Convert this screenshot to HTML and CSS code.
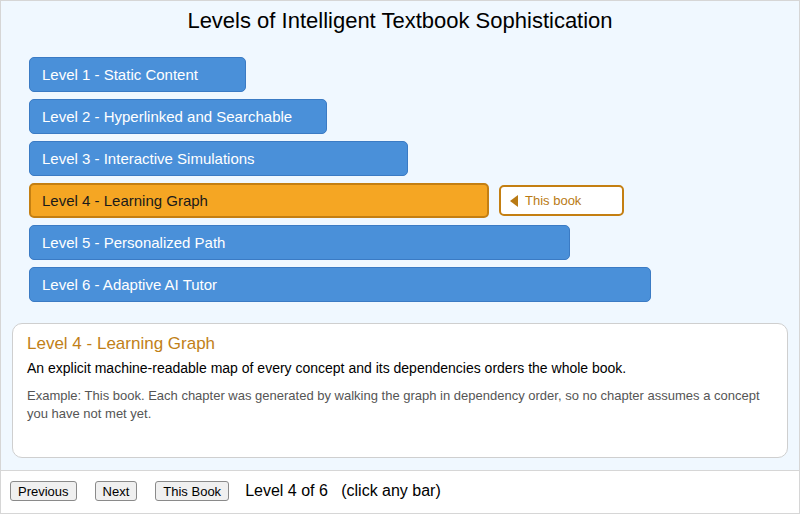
FILE: index.html
```html
<!DOCTYPE html>
<html>

<head>
    <title>Levels of Intelligent Textbook Sophistication</title>
    <link rel="stylesheet" href="styles.css">
    <script>
        // Description: data for each level, the text shown in the info box
        let levels = [
            ["Level 1 - Static Content", "Plain text and pictures, the same as a printed book.", "Example: A PDF of a printed textbook."],
            ["Level 2 - Hyperlinked and Searchable", "Pages are linked together and the whole book can be searched.", "Example: A web site with a table of contents and a search box."],
            ["Level 3 - Interactive Simulations", "Readers can change values in small programs and watch what happens.", "Example: A slider that changes the angle of a launched ball."],
            ["Level 4 - Learning Graph", "An explicit machine-readable map of every concept and its dependencies orders the whole book.", "Example: This book. Each chapter was generated by walking the graph in dependency order, so no chapter assumes a concept you have not met yet."],
            ["Level 5 - Personalized Path", "The book picks the next section based on what each reader already knows.", "Example: A quiz result that skips chapters the reader has mastered."],
            ["Level 6 - Adaptive AI Tutor", "An AI tutor talks with the reader and adapts the lesson as it goes.", "Example: A chatbot that explains a concept again in a new way."]
        ]
        let current = 3
        let thisBook = 3

        // Description: shows the level that was picked
        // Input/Parameters: index of the level, 0 to 5
        function showLevel(n) {
            current = n
            let bars = document.querySelectorAll(".bar")
            for (let i = 0; i < bars.length; i++) {
                bars[i].classList.remove("selected")
            }
            bars[n].classList.add("selected")
            infoTitle.innerHTML = levels[n][0]
            infoText.innerHTML = levels[n][1]
            infoExample.innerHTML = levels[n][2]
            levelText.innerHTML = "Level " + (n + 1) + " of 6   (click any bar)"
        }
        function previousLevel() {
            if (current > 0) {
                showLevel(current - 1)
            }
        }
        function nextLevel() {
            if (current < 5) {
                showLevel(current + 1)
            }
        }
    </script>
</head>

<body>
    <div class="app">
        <div class="canvas">
            <h1 class="title">Levels of Intelligent Textbook Sophistication</h1>

            <div class="bars">
                <div class="row">
                    <div class="bar" style="width: 217px" onclick="showLevel(0)">Level 1 - Static Content</div>
                </div>
                <div class="row">
                    <div class="bar" style="width: 298px" onclick="showLevel(1)">Level 2 - Hyperlinked and Searchable</div>
                </div>
                <div class="row">
                    <div class="bar" style="width: 379px" onclick="showLevel(2)">Level 3 - Interactive Simulations</div>
                </div>
                <div class="row">
                    <div class="bar selected" style="width: 460px" onclick="showLevel(3)">Level 4 - Learning Graph</div>
                    <div class="tag"><span class="arrow"></span>This book</div>
                </div>
                <div class="row">
                    <div class="bar" style="width: 541px" onclick="showLevel(4)">Level 5 - Personalized Path</div>
                </div>
                <div class="row">
                    <div class="bar" style="width: 622px" onclick="showLevel(5)">Level 6 - Adaptive AI Tutor</div>
                </div>
            </div>

            <div class="info">
                <div class="infoTitle" id="infoTitle">Level 4 - Learning Graph</div>
                <div class="infoText" id="infoText">An explicit machine-readable map of every concept and its dependencies orders the whole book.</div>
                <div class="infoExample" id="infoExample">Example: This book. Each chapter was generated by walking the graph in dependency order, so no chapter assumes a concept you have not met yet.</div>
            </div>
        </div>

        <div class="controls">
            <button class="btn" onclick="previousLevel()">Previous</button>
            <button class="btn" onclick="nextLevel()">Next</button>
            <button class="btn" onclick="showLevel(thisBook)">This Book</button>
            <span class="levelText" id="levelText">Level 4 of 6   (click any bar)</span>
        </div>
    </div>
</body>

</html>
```

FILE: styles.css
```css
body {
    margin: 0;
    background: #ffffff;
    font-family: 'Liberation Sans', Arial, Helvetica, sans-serif;
    color: #000000;
}

.app {
    width: 800px;
    box-sizing: border-box;
    border: 1px solid #d6d6d6;
}

.canvas {
    height: 469px;
    background: #f0f8ff;
    border-bottom: 1px solid #d6d6d6;
}

.title {
    margin: 0;
    padding-top: 7px;
    font-size: 22px;
    line-height: 26px;
    font-weight: normal;
    text-align: center;
}

/* bars */
.bars {
    display: flex;
    flex-direction: column;
    gap: 7px;
    margin: 23px 0 0 28px;
}

.row {
    display: flex;
    align-items: center;
    height: 35px;
}

.bar {
    box-sizing: border-box;
    height: 35px;
    display: flex;
    align-items: center;
    padding-left: 12px;
    background-color: #4a90d9;
    border: 1px solid #3b7bc4;
    border-radius: 5px;
    color: #ffffff;
    font-size: 15px;
    cursor: pointer;
}

.bar.selected {
    padding-left: 11px;
    background-color: #f5a623;
    border: 2px solid #c47f12;
    color: #1a1a1a;
}

.tag {
    box-sizing: border-box;
    width: 125px;
    height: 31px;
    margin-left: 10px;
    display: flex;
    align-items: center;
    padding-left: 9px;
    background: #ffffff;
    border: 2px solid #c47f12;
    border-radius: 5px;
    color: #b97a14;
    font-size: 13px;
}

.arrow {
    width: 0;
    height: 0;
    margin-right: 7px;
    border-top: 6px solid transparent;
    border-bottom: 6px solid transparent;
    border-right: 8px solid #b97a14;
}

/* info box */
.info {
    box-sizing: border-box;
    height: 135px;
    margin: 21px 11px 0 11px;
    padding: 10px 14px 0 14px;
    background: #ffffff;
    border: 1px solid #cfcfcf;
    border-radius: 10px;
}

.infoTitle {
    font-size: 17px;
    line-height: 20px;
    color: #c17f18;
}

.infoText {
    margin-top: 4px;
    font-size: 14px;
    line-height: 20px;
}

.infoExample {
    margin-top: 9px;
    font-size: 13px;
    line-height: 18px;
    color: #555555;
}

/* controls */
.controls {
    height: 42px;
    box-sizing: border-box;
    padding: 10px 0 0 9px;
    display: flex;
    align-items: flex-start;
}

.btn {
    height: 20px;
    margin: 0 18px 0 0;
    padding: 0 7px;
    font-family: 'Liberation Sans', Arial, sans-serif;
    font-size: 13px;
    color: #000000;
    background: #f0f0f0;
    border: 1px solid #8a8a8a;
    border-radius: 3px;
}

.levelText {
    margin-left: -2px;
    font-size: 16px;
    line-height: 20px;
    white-space: pre;
}
```
